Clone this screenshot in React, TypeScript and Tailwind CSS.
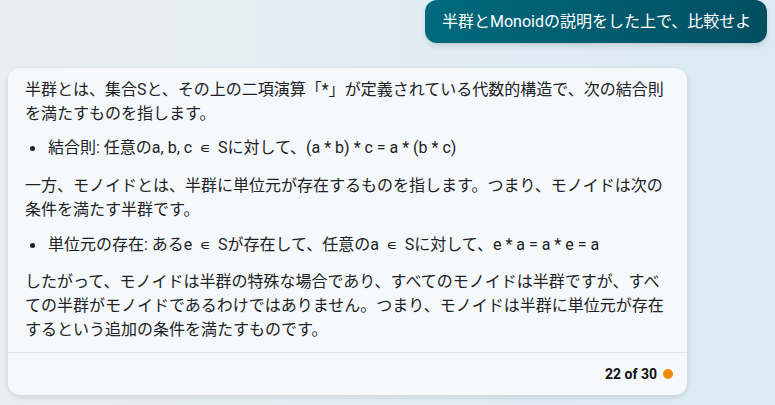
function In() {
  return <span className="font-['DejaVu_Sans'] text-[15px] mx-[3.5px]">∊</span>;
}

export default function App() {
  const font = { fontFamily: "Roboto, 'Noto Sans CJK JP', sans-serif" };
  return (
    <div
      style={font}
      className="w-[775px] h-[405px] overflow-hidden bg-gradient-to-r from-[#e9eff2] to-[#dbeaf3] px-2"
    >
      <div className="flex justify-end">
        <div className="h-[43px] w-[342px] flex items-center pl-[17px] rounded-xl bg-gradient-to-r from-[#016a7d] to-[#014f61] text-white text-[16px] shadow-md">
          半群とMonoidの説明をした上で、比較せよ
        </div>
      </div>

      <div className="mt-[25px] w-[679px] rounded-xl bg-[#f6f9fb] shadow-[0_2px_6px_rgba(0,0,0,0.12)] text-[#202124] text-[16px] leading-[24px]">
        <div className="pl-[17px] pr-[14px] pt-[10px] pb-[10px]">
          <p>
            半群とは、集合Sと、その上の二項演算「*」が定義されている代数的構造で、次の結合則を満たすものを指します。
          </p>
          <ul className="mt-[10px]">
            <li className="flex items-center">
              <span className="w-[23px] pl-[5px] flex">
                <span className="w-[5px] h-[5px] rounded-full bg-[#202124]" />
              </span>
              <span>結合則: 任意のa, b, c <In /> Sに対して、(a * b) * c = a * (b * c)</span>
            </li>
          </ul>
          <p className="mt-[14px]">
            一方、モノイドとは、半群に単位元が存在するものを指します。つまり、モノイドは次の条件を満たす半群です。
          </p>
          <ul className="mt-[11px]">
            <li className="flex items-center">
              <span className="w-[23px] pl-[5px] flex">
                <span className="w-[5px] h-[5px] rounded-full bg-[#202124]" />
              </span>
              <span>単位元の存在: あるe <In /> Sが存在して、任意のa <In /> Sに対して、e * a = a * e = a</span>
            </li>
          </ul>
          <p className="mt-[13px]">
            したがって、モノイドは半群の特殊な場合であり、すべてのモノイドは半群ですが、すべての半群がモノイドであるわけではありません。つまり、モノイドは半群に単位元が存在するという追加の条件を満たすものです。
          </p>
        </div>
        <div className="h-[43px] border-t border-[#dfe3e6] flex items-center justify-end pr-[14px] gap-[6px]">
          <span className="text-[14px] font-bold text-[#111]">22 of 30</span>
          <span className="w-[10px] h-[10px] rounded-full bg-[#f08c00]" />
        </div>
      </div>
    </div>
  );
}
